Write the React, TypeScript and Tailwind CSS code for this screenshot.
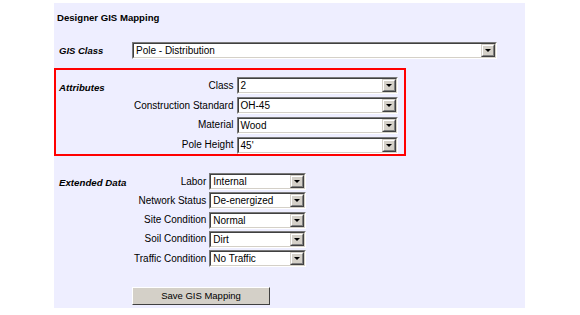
import React from "react";

function Arrow() {
  return (
    <div className="flex h-full w-[14px] shrink-0 border border-t-[#d4d0c8] border-l-[#d4d0c8] border-b-[#404040] border-r-[#404040]">
      <div className="flex flex-1 items-center justify-center border border-t-white border-l-white border-b-[#808080] border-r-[#808080] bg-[#d4d0c8]">
        <div className="h-0 w-0 border-x-[3px] border-t-[3px] border-x-transparent border-t-black" />
      </div>
    </div>
  );
}

function Select({ value, w }: { value: string; w: string }) {
  return (
    <div
      className={`flex h-[17px] ${w} border border-t-[#7a7a7a] border-l-[#7a7a7a] border-b-white border-r-white`}
    >
      <div className="flex flex-1 border border-t-[#404040] border-l-[#404040] border-b-[#d4d0c8] border-r-[#d4d0c8] bg-white">
        <span className="flex-1 truncate pl-[2px] text-[10px] leading-[13px] text-black">{value}</span>
        <Arrow />
      </div>
    </div>
  );
}

const attributes = [
  ["Class", "2"],
  ["Construction Standard", "OH-45"],
  ["Material", "Wood"],
  ["Pole Height", "45'"],
];

const extended = [
  ["Labor", "Internal"],
  ["Network Status", "De-energized"],
  ["Site Condition", "Normal"],
  ["Soil Condition", "Dirt"],
  ["Traffic Condition", "No Traffic"],
];

export default function App() {
  return (
    <div className="h-[315px] w-[580px] bg-white pt-[3px] font-['Liberation_Sans',Arial,sans-serif] text-black">
      <div className="ml-[54px] flex h-[305px] w-[471px] flex-col bg-[#eeeeff]">
        <div className="pl-[3px] pt-[9px] text-[9.6px] font-bold leading-[12px]">Designer GIS Mapping</div>

        <div className="mt-[18px] flex items-center">
          <div className="w-[78px] pl-[5px] text-[9.5px] font-bold italic leading-[12px]">GIS Class</div>
          <Select value="Pole - Distribution" w="w-[365px]" />
        </div>

        <div className="mt-[9px] flex h-[88px] w-[352px] border-2 border-[#ff0000] pt-[7px]">
          <div className="w-[78px] pl-[3px] pt-[5px] text-[9.7px] font-bold italic leading-[12px]">Attributes</div>
          <div className="grid grid-cols-[auto_161px] items-center gap-x-[3px] gap-y-[2.33px]">
            {attributes.map(([l, v]) => (
              <React.Fragment key={l}>
                <div className="text-right text-[10px] leading-[12px]">{l}</div>
                <Select value={v} w="w-[161px]" />
              </React.Fragment>
            ))}
          </div>
        </div>

        <div className="mt-[17px] flex">
          <div className="w-[80px] pl-[5px] pt-[4px] text-[9.7px] font-bold italic leading-[12px]">Extended Data</div>
          <div className="grid grid-cols-[auto_97px] items-center gap-x-[3px] gap-y-[2.33px]">
            {extended.map(([l, v]) => (
              <React.Fragment key={l}>
                <div className="text-right text-[10px] leading-[12px]">{l}</div>
                <Select value={v} w="w-[97px]" />
              </React.Fragment>
            ))}
          </div>
        </div>

        <div className="ml-[78px] mt-[15px]">
          <button className="h-[18px] w-[138px] border border-t-white border-l-white border-b-[#404040] border-r-[#404040] bg-[#d4d0c8] text-[9.5px] leading-[14px] text-black">
            Save GIS Mapping
          </button>
        </div>
      </div>
    </div>
  );
}
